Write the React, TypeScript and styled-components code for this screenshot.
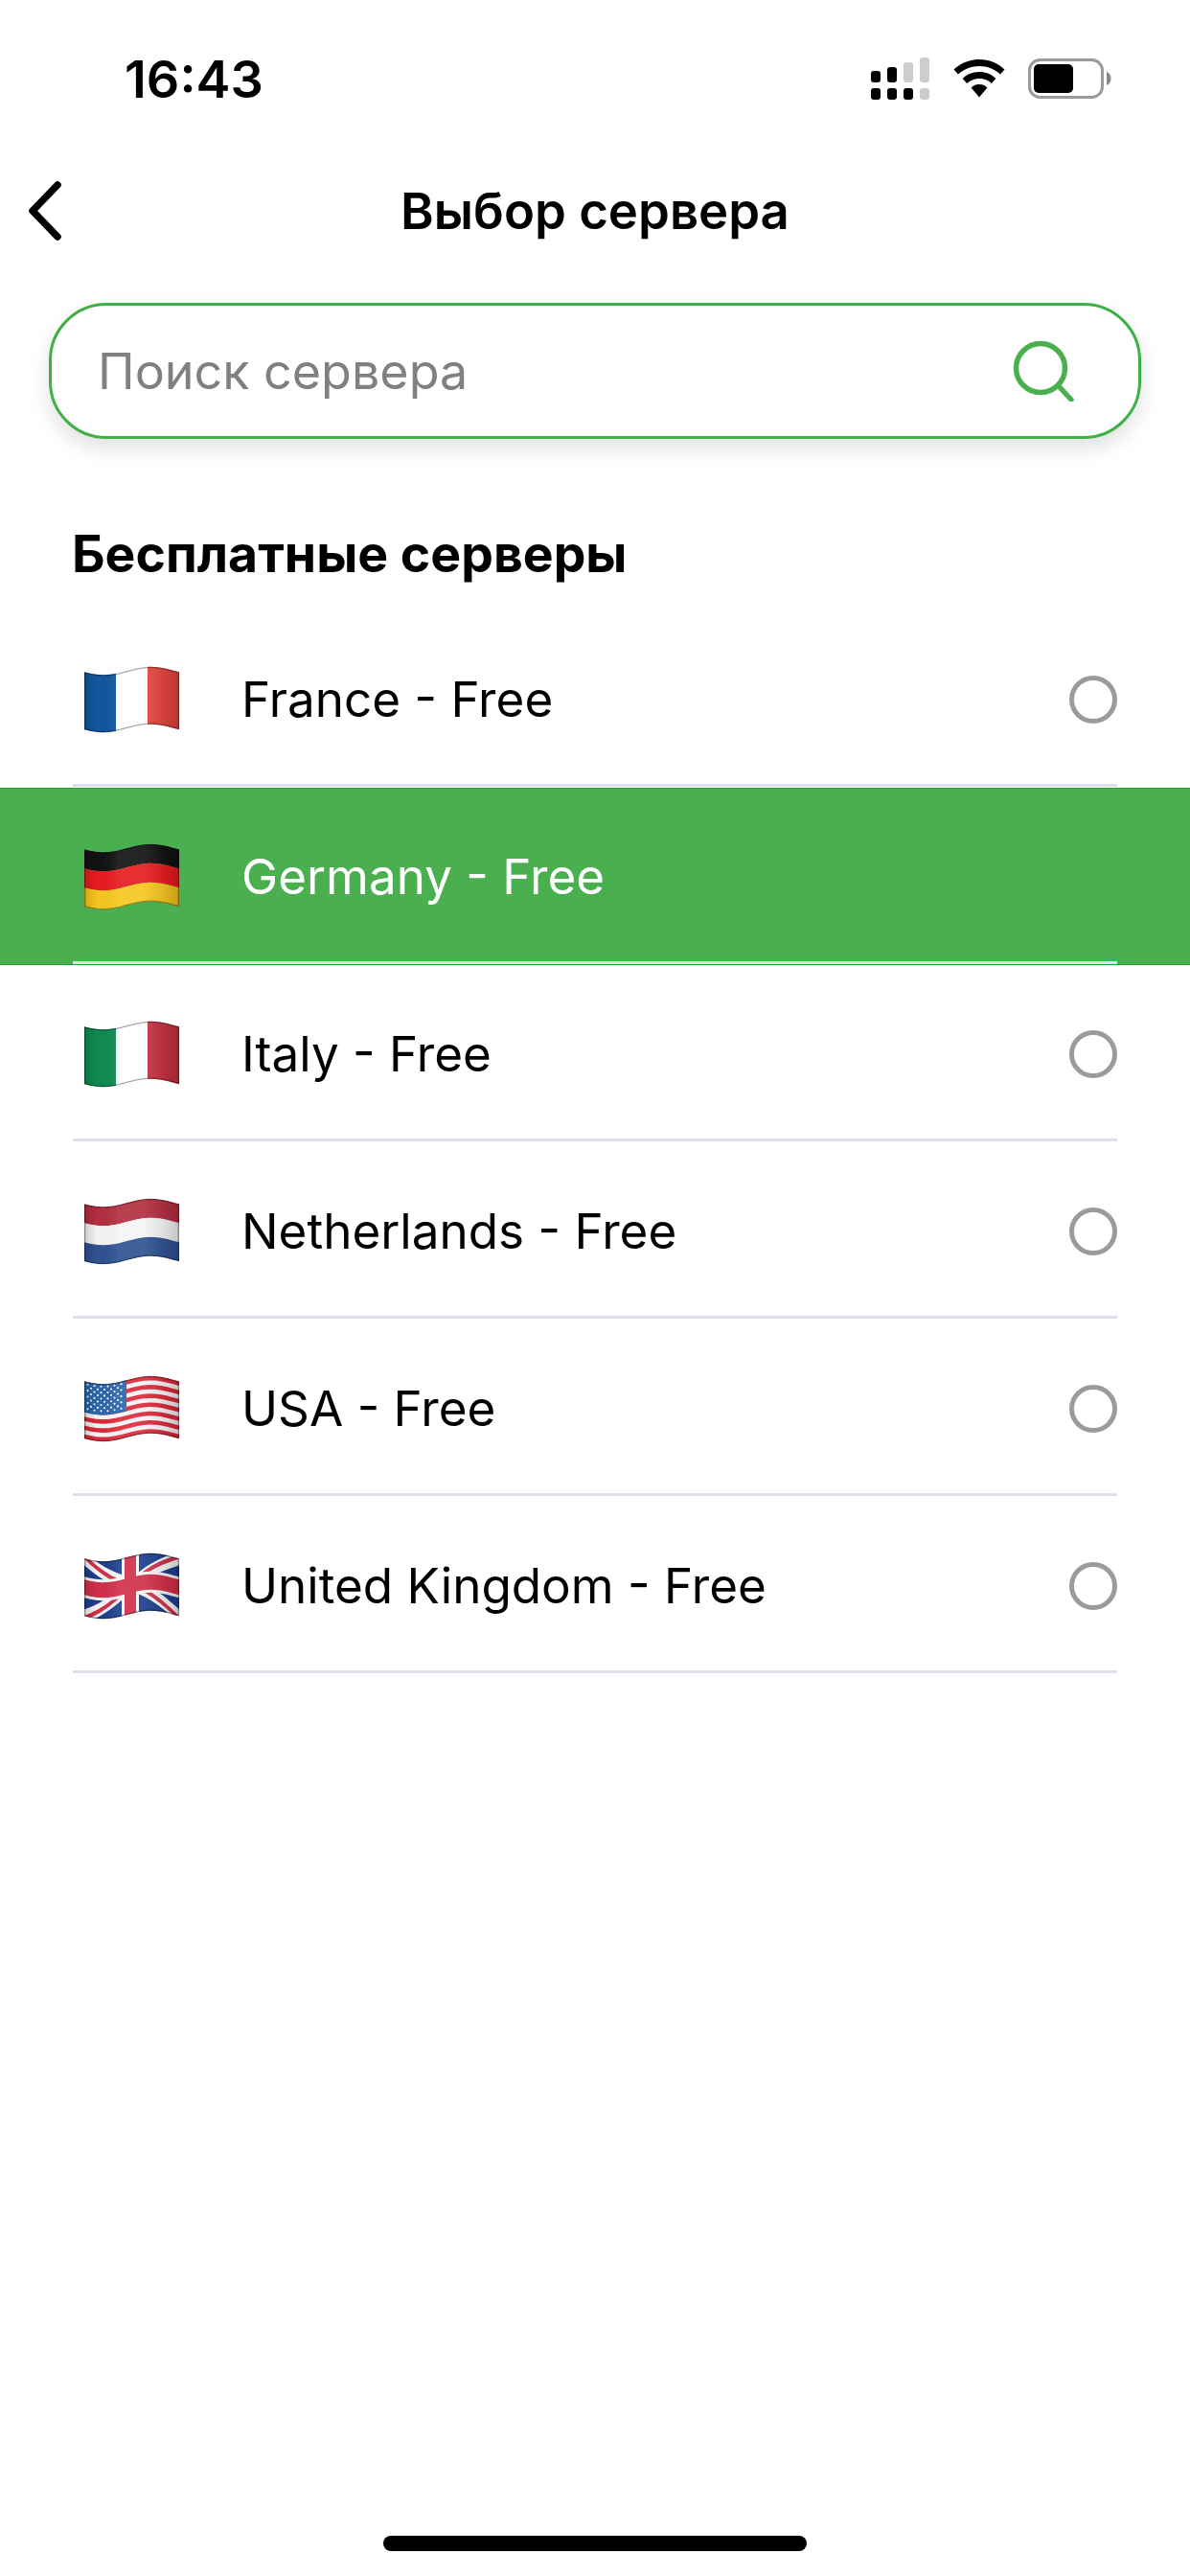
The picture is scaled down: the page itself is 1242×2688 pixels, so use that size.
import { FunctionComponent, ReactNode, useId } from 'react'
import styled, { createGlobalStyle } from 'styled-components'

const GREEN = '#4ab04f'
const BORDER_GREEN = '#3fb045'

const GlobalStyle = createGlobalStyle`
  html, body {
    margin: 0;
    padding: 0;
    background: #fff;
  }
  * {
    box-sizing: border-box;
  }
`

const Page = styled.div`
  width: 1242px;
  height: 2688px;
  display: flex;
  flex-direction: column;
  background: #fff;
  color: #000;
  font-family: Inter, 'Noto Sans', sans-serif;
  overflow: hidden;
`

const StatusBar = styled.div`
  height: 164px;
  flex: none;
  display: flex;
  align-items: center;
  justify-content: space-between;
  padding: 0 82px 0 130px;
`

const Time = styled.div`
  margin-top: 2px;
  font-size: 54px;
  font-weight: 600;
  line-height: 1;
`

const StatusIcons = styled.div`
  display: flex;
  align-items: center;
  gap: 24px;
`

const NavBar = styled.div`
  height: 112px;
  flex: none;
  display: grid;
  grid-template-columns: 1fr auto 1fr;
  align-items: center;
`

const BackButton = styled.div`
  padding-left: 26px;
`

const Title = styled.div`
  font-size: 52.7px;
  font-weight: 600;
  line-height: 1;
`

const SearchWrap = styled.div`
  flex: none;
  margin: 40px 51px 0 51px;
  height: 142px;
  display: flex;
  align-items: center;
  justify-content: space-between;
  padding: 0 67px 0 48px;
  border: 3px solid ${BORDER_GREEN};
  border-radius: 60px;
  background: #fff;
  box-shadow: 0 10px 22px rgba(0, 0, 0, 0.12);
`

const Placeholder = styled.div`
  padding-top: 2px;
  font-size: 52px;
  color: #808080;
  line-height: 1;
`

const SectionTitle = styled.div`
  flex: none;
  margin: 90px 0 0 75px;
  height: 60px;
  font-size: 53.5px;
  font-weight: 700;
  line-height: 60px;
`

const List = styled.div`
  flex: none;
  margin-top: 29px;
  display: flex;
  flex-direction: column;
`

const Row = styled.div<{ $selected?: boolean }>`
  height: 185px;
  background: ${(p) => (p.$selected ? GREEN : 'transparent')};
  border-top: 1px solid ${(p) => (p.$selected ? '#1aa821' : 'transparent')};
  border-bottom: 1px solid ${(p) => (p.$selected ? '#1aa821' : 'transparent')};
  color: ${(p) => (p.$selected ? '#fff' : '#000')};
`

const RowInner = styled.div`
  height: 100%;
  margin: 0 76px;
  display: flex;
  align-items: center;
  border-bottom: 3px solid #dedeee;
  padding: 3px 0 0 12px;
`

const RowLabel = styled.div`
  margin-left: 65px;
  flex: 1;
  font-size: 51.2px;
  line-height: 1;
`

const Radio = styled.div`
  width: 50px;
  height: 50px;
  border: 5px solid #9b9b9b;
  border-radius: 50%;
`

const HomeIndicator = styled.div`
  margin: auto auto 26px;
  width: 442px;
  height: 16px;
  border-radius: 8px;
  background: #000;
`

// flag drawing: flat polygons get bent along the same wave
const FLAG_W = 99
const FLAG_H = 70
const TOP = 5
const BOTTOM = 65

type Pt = [number, number]

const wave = (x: number) => 4.2 * Math.cos(2 * Math.PI * (x / FLAG_W - 0.2))

const warp = (pts: Pt[]) => {
  const out: string[] = []
  pts.forEach((p, i) => {
    const n = pts[(i + 1) % pts.length]
    for (let s = 0; s < 16; s++) {
      const x = p[0] + ((n[0] - p[0]) * s) / 16
      const y = p[1] + ((n[1] - p[1]) * s) / 16
      out.push(`${x.toFixed(2)},${(y + wave(x)).toFixed(2)}`)
    }
  })
  return `M${out.join('L')}Z`
}

const rect = (x1: number, y1: number, x2: number, y2: number): Pt[] => [
  [x1, y1],
  [x2, y1],
  [x2, y2],
  [x1, y2]
]

const band = (
  x1: number,
  y1: number,
  x2: number,
  y2: number,
  w: number
): Pt[] => {
  const len = Math.hypot(x2 - x1, y2 - y1)
  const nx = (-(y2 - y1) / len) * (w / 2)
  const ny = ((x2 - x1) / len) * (w / 2)
  return [
    [x1 + nx, y1 + ny],
    [x2 + nx, y2 + ny],
    [x2 - nx, y2 - ny],
    [x1 - nx, y1 - ny]
  ]
}

const Poly: FunctionComponent<{ pts: Pt[]; fill: string }> = ({ pts, fill }) => (
  <path d={warp(pts)} fill={fill} />
)

const FlagBase: FunctionComponent<{ children: ReactNode }> = ({ children }) => {
  const id = useId().replace(/[^a-zA-Z0-9]/g, '')
  const outline = warp(rect(0, TOP, FLAG_W, BOTTOM))
  return (
    <svg
      width={FLAG_W}
      height={FLAG_H}
      viewBox={`0 0 ${FLAG_W} ${FLAG_H}`}
      style={{ flex: 'none' }}
    >
      <defs>
        <clipPath id={`${id}c`}>
          <path d={outline} />
        </clipPath>
        <linearGradient id={`${id}s`} x1='0' x2='1' y1='0' y2='0'>
          <stop offset='0' stopColor='#000' stopOpacity='0.16' />
          <stop offset='0.14' stopColor='#000' stopOpacity='0' />
          <stop offset='0.36' stopColor='#fff' stopOpacity='0.08' />
          <stop offset='0.62' stopColor='#fff' stopOpacity='0.08' />
          <stop offset='0.86' stopColor='#000' stopOpacity='0.1' />
          <stop offset='1' stopColor='#000' stopOpacity='0.2' />
        </linearGradient>
      </defs>
      <g clipPath={`url(#${id}c)`}>
        {children}
        <path d={outline} fill={`url(#${id}s)`} />
        <path
          d={outline}
          fill='none'
          stroke='#000'
          strokeOpacity='0.34'
          strokeWidth='2.6'
        />
      </g>
    </svg>
  )
}

const third = (BOTTOM - TOP) / 3

const VerticalFlag: FunctionComponent<{ colors: string[] }> = ({ colors }) => (
  <FlagBase>
    {colors.map((c, i) => (
      <Poly
        key={c}
        pts={rect((FLAG_W / 3) * i, 0, (FLAG_W / 3) * (i + 1), FLAG_H)}
        fill={c}
      />
    ))}
  </FlagBase>
)

const HorizontalFlag: FunctionComponent<{ colors: string[] }> = ({ colors }) => (
  <FlagBase>
    {colors.map((c, i) => (
      <Poly
        key={c}
        pts={rect(0, TOP + third * i, FLAG_W, TOP + third * (i + 1))}
        fill={c}
      />
    ))}
  </FlagBase>
)

const UsaFlag: FunctionComponent = () => {
  const h = (BOTTOM - TOP) / 13
  const stars: Pt[] = []
  for (let r = 0; r < 9; r++) {
    const count = r % 2 === 0 ? 6 : 5
    for (let c = 0; c < count; c++) {
      stars.push([
        (r % 2 === 0 ? 3.5 : 7) + c * 7,
        TOP + 2.6 + r * 3.2
      ])
    }
  }
  return (
    <FlagBase>
      <Poly pts={rect(0, 0, FLAG_W, FLAG_H)} fill='#f4f4f4' />
      {Array.from({ length: 7 }).map((_, i) => (
        <Poly
          key={i}
          pts={rect(0, TOP + h * i * 2, FLAG_W, TOP + h * (i * 2 + 1))}
          fill='#dc2a3a'
        />
      ))}
      <Poly pts={rect(0, 0, 44, TOP + h * 7)} fill='#2b66ab' />
      {stars.map(([x, y]) => (
        <circle key={`${x}-${y}`} cx={x} cy={y + wave(x)} r='1.05' fill='#fff' />
      ))}
    </FlagBase>
  )
}

const UkFlag: FunctionComponent = () => {
  const cx = 48
  const cy = (TOP + BOTTOM) / 2
  const red = '#d1304a'
  return (
    <FlagBase>
      <Poly pts={rect(0, 0, FLAG_W, FLAG_H)} fill='#1d3f8e' />
      <Poly pts={band(0, TOP, FLAG_W, BOTTOM, 12)} fill='#f5f5f5' />
      <Poly pts={band(0, BOTTOM, FLAG_W, TOP, 12)} fill='#f5f5f5' />
      <Poly pts={band(0, TOP - 2, cx - 8, cy - 4, 4)} fill={red} />
      <Poly pts={band(cx + 8, cy + 4, FLAG_W, BOTTOM + 2, 4)} fill={red} />
      <Poly pts={band(0, BOTTOM + 2, cx - 8, cy + 6, 4)} fill={red} />
      <Poly pts={band(cx + 8, cy - 6, FLAG_W, TOP - 2, 4)} fill={red} />
      <Poly pts={rect(cx - 9, 0, cx + 9, FLAG_H)} fill='#f5f5f5' />
      <Poly pts={rect(0, cy - 11, FLAG_W, cy + 11)} fill='#f5f5f5' />
      <Poly pts={rect(cx - 6, 0, cx + 6, FLAG_H)} fill={red} />
      <Poly pts={rect(0, cy - 8, FLAG_W, cy + 8)} fill={red} />
    </FlagBase>
  )
}

const servers = [
  {
    name: 'France - Free',
    flag: <VerticalFlag colors={['#12569e', '#ffffff', '#e5463f']} />
  },
  {
    name: 'Germany - Free',
    flag: <HorizontalFlag colors={['#121212', '#e71c20', '#f6c61f']} />,
    selected: true
  },
  {
    name: 'Italy - Free',
    flag: <VerticalFlag colors={['#0f8a50', '#ffffff', '#c53343']} />
  },
  {
    name: 'Netherlands - Free',
    flag: <HorizontalFlag colors={['#b22f40', '#f4f4f4', '#2f5293']} />
  },
  { name: 'USA - Free', flag: <UsaFlag /> },
  { name: 'United Kingdom - Free', flag: <UkFlag /> }
]

const SignalIcon = () => (
  <svg width='62' height='44' viewBox='0 0 62 44'>
    <g fill='#000'>
      <rect x='0' y='14' width='10' height='12' rx='3' />
      <rect x='0' y='32' width='10' height='12' rx='3' />
      <rect x='17' y='10' width='10' height='16' rx='3' />
      <rect x='17' y='32' width='10' height='12' rx='3' />
      <rect x='34' y='32' width='10' height='12' rx='3' />
    </g>
    <g fill='#cdcdcd'>
      <rect x='34' y='5' width='10' height='21' rx='3' />
      <rect x='51' y='0' width='10' height='26' rx='3' />
      <rect x='51' y='32' width='10' height='12' rx='3' />
    </g>
  </svg>
)

const WifiIcon = () => (
  <svg width='54' height='40' viewBox='0 0 54 40'>
    <path
      d='M27 0C16.5 0 7.5 4 0.5 10.5L5 15.5C10.8 10.2 18.5 7 27 7S43.2 10.2 49 15.5L53.5 10.5C46.5 4 37.5 0 27 0Z'
      fill='#000'
    />
    <path
      d='M27 13C20 13 14 15.6 9.6 20L14.2 25C17.5 21.8 22 20 27 20S36.5 21.8 39.8 25L44.4 20C40 15.6 34 13 27 13Z'
      fill='#000'
    />
    <path
      d='M27 26C23.6 26 20.8 27.2 18.6 29.4L27 39.5L35.4 29.4C33.2 27.2 30.4 26 27 26Z'
      fill='#000'
    />
  </svg>
)

const BatteryIcon = () => (
  <svg width='87' height='42' viewBox='0 0 87 42'>
    <rect
      x='1.5'
      y='1.5'
      width='76'
      height='39'
      rx='11'
      fill='none'
      stroke='#9a9a9a'
      strokeWidth='3'
    />
    <rect x='6' y='6' width='41' height='30' rx='5' fill='#000' />
    <path d='M82 14C85 15 86.5 18 86.5 21S85 27 82 28Z' fill='#8a8a8a' />
  </svg>
)

const BackIcon = () => (
  <svg width='42' height='64' viewBox='0 0 42 64' style={{ display: 'block' }}>
    <path
      d='M34 5L8 32L34 59'
      fill='none'
      stroke='#000'
      strokeWidth='7.5'
      strokeLinecap='round'
      strokeLinejoin='round'
    />
  </svg>
)

const SearchIcon = () => (
  <svg width='64' height='64' viewBox='0 0 64 64' style={{ flex: 'none' }}>
    <circle
      cx='29'
      cy='29'
      r='25.5'
      fill='none'
      stroke={GREEN}
      strokeWidth='5.5'
    />
    <path
      d='M48 48L61 62'
      fill='none'
      stroke={GREEN}
      strokeWidth='5.5'
      strokeLinecap='round'
    />
  </svg>
)

const App: FunctionComponent = () => (
  <Page>
    <GlobalStyle />
    <StatusBar>
      <Time>16:43</Time>
      <StatusIcons>
        <SignalIcon />
        <WifiIcon />
        <BatteryIcon />
      </StatusIcons>
    </StatusBar>
    <NavBar>
      <BackButton>
        <BackIcon />
      </BackButton>
      <Title>Выбор сервера</Title>
    </NavBar>
    <SearchWrap>
      <Placeholder>Поиск сервера</Placeholder>
      <SearchIcon />
    </SearchWrap>
    <SectionTitle>Бесплатные серверы</SectionTitle>
    <List>
      {servers.map((s) => (
        <Row key={s.name} $selected={s.selected}>
          <RowInner>
            {s.flag}
            <RowLabel>{s.name}</RowLabel>
            {!s.selected && <Radio />}
          </RowInner>
        </Row>
      ))}
    </List>
    <HomeIndicator />
  </Page>
)

export default App
